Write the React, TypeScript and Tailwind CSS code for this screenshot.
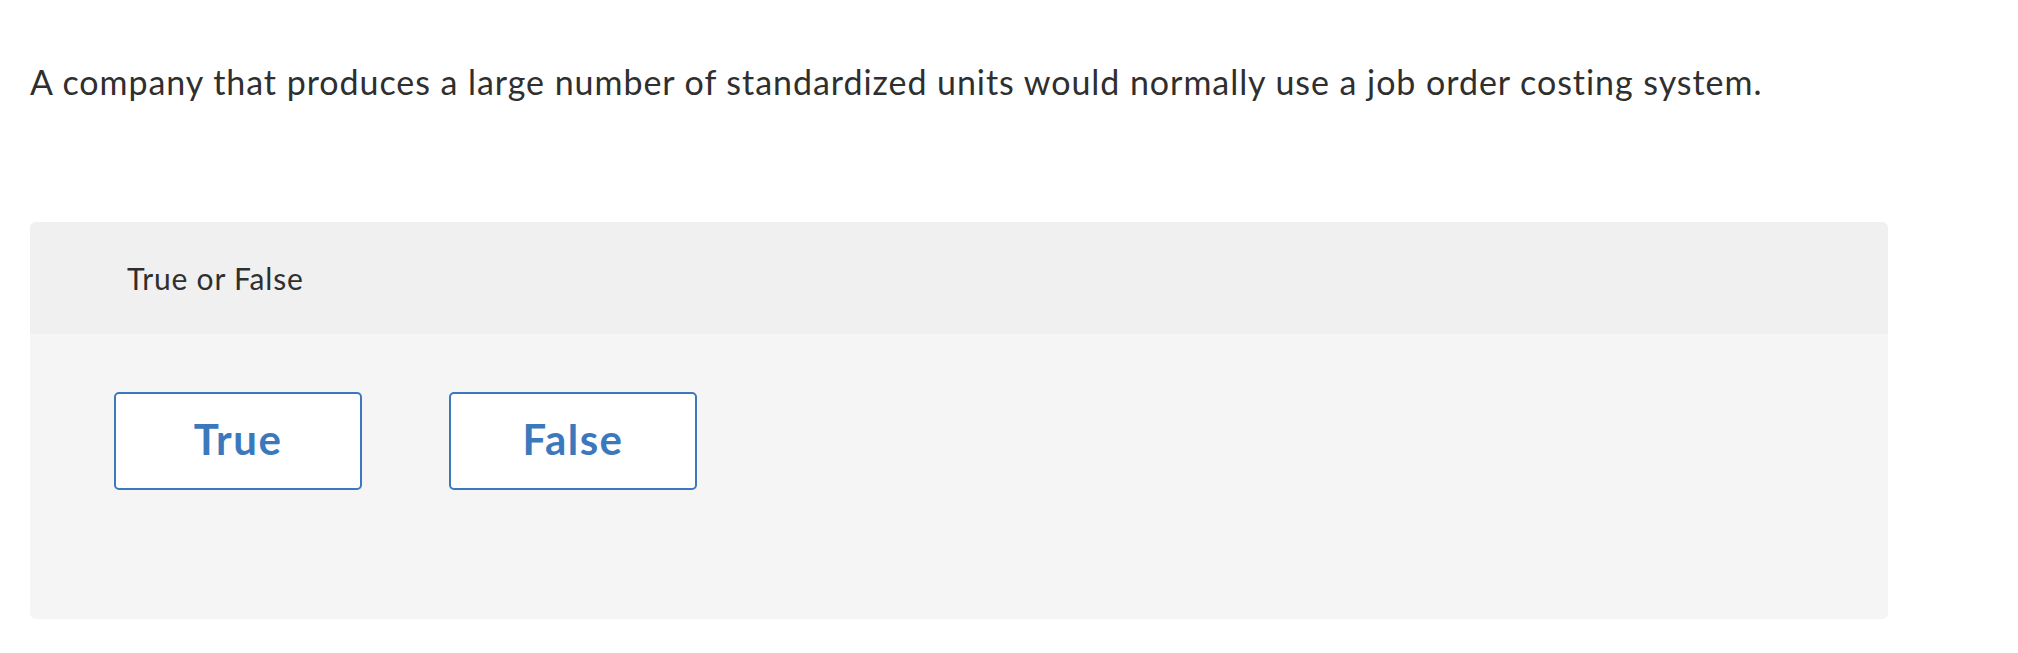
export default function App() {
  return (
    <div className="min-h-[653px] w-full bg-white px-[30px] pt-[60px] text-[#2f2f2f]" style={{ fontFamily: 'Lato, "Open Sans", sans-serif' }}>
      <p className="text-[34px] leading-[44px] tracking-[0.95px]">
        A company that produces a large number of standardized units would normally use a job order costing system.
      </p>
      <div className="mt-[118px] w-[1858px] overflow-hidden rounded-[6px] bg-[#f5f5f5]">
        <div className="flex h-[112px] items-center bg-[#f0f0f0] pl-[97px] text-[30px] tracking-[0.8px]">True or False</div>
        <div className="flex h-[285px] items-start gap-[87px] pl-[84px] pt-[58px]">
          <button className="flex h-[98px] w-[248px] items-center justify-center rounded-[5px] border-2 border-[#3c79bc] bg-white pb-[3px] text-[42px] font-bold tracking-[1.5px] text-[#3c79bc]">
            True
          </button>
          <button className="flex h-[98px] w-[248px] items-center justify-center rounded-[5px] border-2 border-[#3c79bc] bg-white pb-[3px] text-[42px] font-bold tracking-[1.5px] text-[#3c79bc]">
            False
          </button>
        </div>
      </div>
    </div>
  );
}
